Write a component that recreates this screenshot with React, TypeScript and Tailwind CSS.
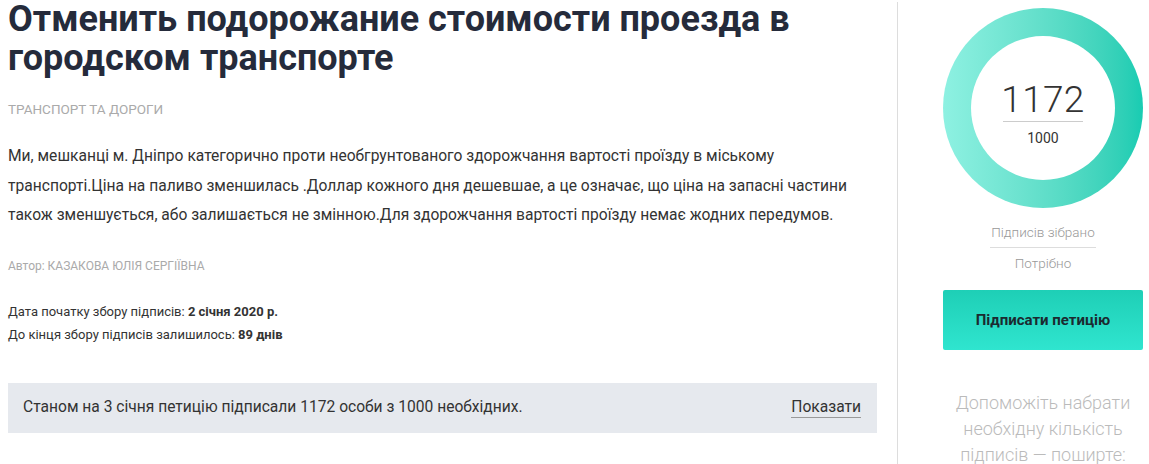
export default function App() {
  return (
    <div className="flex w-[1149px] h-[464px] overflow-hidden bg-white font-['Roboto',sans-serif]">
      {/* left column */}
      <div className="w-[869px] ml-2 shrink-0">
        <h1 className="text-[36px] leading-[39px] font-bold text-[#252b3b]">
          Отменить подорожание стоимости проезда в городском транспорте
        </h1>
        <div className="mt-[22px] text-[13.5px] uppercase text-[#aaa] leading-[18px]">
          Транспорт та дороги
        </div>
        <p className="mt-[24px] text-[15.6px] leading-[29.5px] text-[#333]">
          Ми, мешканці м. Дніпро категорично проти необгрунтованого здорожчання вартості проїзду в міському
          транспорті.Ціна на паливо зменшилась .Доллар кожного дня дешевшае, а це означає, що ціна на запасні
          частини також зменшується, або залишається не змінною.Для здорожчання вартості проїзду немає жодних
          передумов.
        </p>
        <div className="mt-[27px] text-[12px] leading-[16px] text-[#aaa]">
          Автор: КАЗАКОВА ЮЛІЯ СЕРГІЇВНА
        </div>
        <div className="mt-[26px] text-[13px] leading-[23px] text-[#333]">
          <div>
            Дата початку збору підписів: <b>2 січня 2020 р.</b>
          </div>
          <div>
            До кінця збору підписів залишилось: <b>89 днів</b>
          </div>
        </div>
        <div className="mt-[37px] h-[50px] bg-[#e6e9ee] flex items-center justify-between pl-[15px] pr-[16px] text-[15.6px] text-[#333]">
          <span>Станом на 3 січня петицію підписали 1172 особи з 1000 необхідних.</span>
          <span className="border-b border-[#999] leading-[20px]">Показати</span>
        </div>
      </div>

      {/* divider */}
      <div className="ml-[20px] mt-[2px] w-px bg-[#ddd] shrink-0" />

      {/* right column */}
      <div className="ml-[45px] w-[200px] shrink-0 flex flex-col items-center">
        <div className="mt-[8px] size-[200px] shrink-0 rounded-full bg-gradient-to-r from-[#8ef1e2] to-[#17ccb2] flex items-center justify-center">
          <div className="size-[144px] rounded-full bg-white flex flex-col items-center pt-[44px]">
            <div className="text-[37px] leading-[40px] font-light text-[#333] tracking-[0.3px]">1172</div>
            <div className="w-[80px] h-px bg-[#ccc] mt-[1px]" />
            <div className="mt-[7px] text-[14px] leading-[18px] text-[#333]">1000</div>
          </div>
        </div>
        <div className="mt-[15px] text-[13.5px] font-light text-[#999] leading-[18px] pb-[6px] border-b border-[#ddd] px-[1px]">
          Підписів зібрано
        </div>
        <div className="mt-[6px] text-[13.5px] font-light text-[#999] leading-[18px]">Потрібно</div>
        <button className="mt-[18px] w-[200px] h-[60px] shrink-0 rounded-[2px] bg-gradient-to-b from-[#1ecfb6] to-[#2fe5cf] text-[15px] font-bold text-[#1b2a30]">
          Підписати петицію
        </button>
        <div className="mt-[40px] text-[18px] leading-[26px] font-light text-[#bbb] text-center">
          Допоможіть набрати
          <br />
          необхідну кількість
          <br />
          підписів — поширте:
        </div>
      </div>
    </div>
  )
}
